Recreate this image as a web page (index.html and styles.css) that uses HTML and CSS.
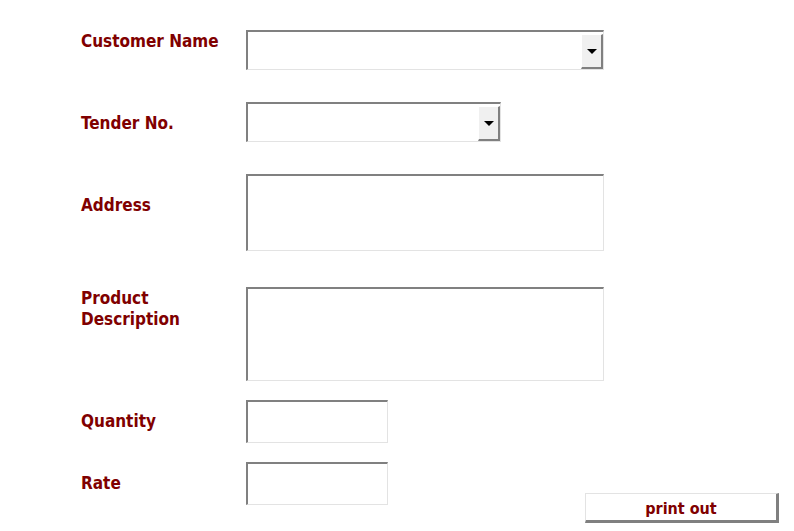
FILE: index.html
```html
<!DOCTYPE html>
<html lang="en">
  <head>
    <meta charset="UTF-8" />
    <title>Tender Entry</title>
    <link rel="stylesheet" href="styles.css">
  </head>
  <body>
    <form class="tender-form">
      <div class="form-row">
        <label class="field-label offset-1">Customer Name</label>
        <div class="combo combo-wide">
          <span class="combo-value"></span>
          <span class="combo-btn"><span class="arrow"></span></span>
        </div>
      </div>

      <div class="form-row">
        <label class="field-label offset-10">Tender No.</label>
        <div class="combo combo-narrow">
          <span class="combo-value"></span>
          <span class="combo-btn"><span class="arrow"></span></span>
        </div>
      </div>

      <div class="form-row gap-wide">
        <label class="field-label offset-21">Address</label>
        <textarea class="text-box address-box"></textarea>
      </div>

      <div class="form-row gap-small">
        <label class="field-label offset-1">Product<br />Description</label>
        <textarea class="text-box product-box"></textarea>
      </div>

      <div class="form-row gap-small">
        <label class="field-label offset-11">Quantity</label>
        <input class="text-box small-box" type="text" />
      </div>

      <div class="form-row">
        <label class="field-label offset-11">Rate</label>
        <input class="text-box small-box" type="text" />
        <button class="print-btn" type="button">print out</button>
      </div>
    </form>
  </body>
</html>
```

FILE: styles.css
```css
body {
  margin: 0;
  background-color: #fff;
  font-family: "DejaVu Sans Condensed", "DejaVu Sans", sans-serif;
}
.tender-form {
  padding: 30px 15px 0 81px;
}
.form-row {
  display: flex;
  align-items: flex-start;
  margin-bottom: 32px;
}
.form-row.gap-wide {
  margin-bottom: 36px;
}
.form-row.gap-small {
  margin-bottom: 19px;
}
.field-label {
  width: 165px;
  flex-shrink: 0;
  color: #800000;
  font-weight: bold;
  font-size: 17px;
  line-height: 21px;
}
.offset-1 { margin-top: 1px; }
.offset-10 { margin-top: 11px; }
.offset-11 { margin-top: 11px; }
.offset-21 { margin-top: 21px; }

/* combo boxes */
.combo {
  display: flex;
  box-sizing: border-box;
  height: 40px;
  border-top: 2px solid #808080;
  border-left: 2px solid #808080;
  border-bottom: 1px solid #e3e3e3;
  border-right: 1px solid #e3e3e3;
  background: #fff;
  padding: 2px 0 0 0;
}
.combo-wide { width: 358px; }
.combo-narrow { width: 255px; }
.combo-value {
  flex: 1;
}
.combo-btn {
  width: 22px;
  box-sizing: border-box;
  background: #f0f0f0;
  border-top: 1px solid #fff;
  border-left: 1px solid #fff;
  border-right: 2px solid #808080;
  border-bottom: 2px solid #808080;
  display: flex;
  align-items: center;
  justify-content: center;
}
.arrow {
  width: 0;
  height: 0;
  border-left: 5px solid transparent;
  border-right: 5px solid transparent;
  border-top: 5px solid #000;
}

/* text fields */
.text-box {
  box-sizing: border-box;
  margin: 0;
  padding: 2px;
  border-top: 2px solid #808080;
  border-left: 2px solid #808080;
  border-bottom: 1px solid #e3e3e3;
  border-right: 1px solid #e3e3e3;
  background: #fff;
  resize: none;
  outline: none;
  font-family: "DejaVu Sans", sans-serif;
}
.address-box {
  width: 358px;
  height: 77px;
}
.product-box {
  width: 358px;
  height: 94px;
}
.small-box {
  width: 142px;
  height: 43px;
}

.print-btn {
  margin: 31px 0 0 auto;
  width: 194px;
  height: 30px;
  box-sizing: border-box;
  background: #fff;
  border-top: 1px solid #e3e3e3;
  border-left: 1px solid #e3e3e3;
  border-right: 3px solid #808080;
  border-bottom: 3px solid #808080;
  color: #800000;
  font-family: "DejaVu Sans Condensed", "DejaVu Sans", sans-serif;
  font-weight: bold;
  font-size: 16px;
  padding: 2px 0 0 0;
}
```
